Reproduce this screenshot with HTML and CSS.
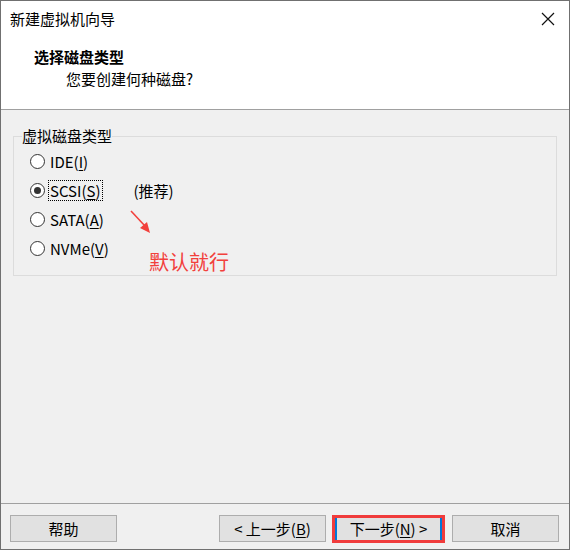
FILE: index.html
```html
<!DOCTYPE html>
<html lang="zh-CN">
<head>
<meta charset="utf-8">
<title>新建虚拟机向导</title>
<link rel="stylesheet" href="styles.css">
</head>
<body>
<div class="window">
  <div class="titlebar">
    <span class="title">新建虚拟机向导</span>
    <svg class="close" width="14" height="14" viewBox="0 0 14 14"><path d="M1 1 L13 13 M13 1 L1 13" stroke="#111" stroke-width="1.2" fill="none"/></svg>
  </div>
  <div class="header">
    <div class="h-title">选择磁盘类型</div>
    <div class="h-sub">您要创建何种磁盘?</div>
  </div>
  <div class="content">
    <fieldset class="group">
      <legend>虚拟磁盘类型</legend>
      <div class="row"><span class="radio"></span><span class="label">IDE(<u>I</u>)</span></div>
      <div class="row"><span class="radio checked"></span><span class="label focus">SCSI(<u>S</u>)</span><span class="rec">(推荐)</span></div>
      <div class="row"><span class="radio"></span><span class="label">SATA(<u>A</u>)</span></div>
      <div class="row"><span class="radio"></span><span class="label">NVMe(<u>V</u>)</span></div>
    </fieldset>
    <svg class="arrow" width="30" height="30" viewBox="0 0 30 30"><path d="M2 2 L16 17" stroke="#f2403c" stroke-width="1.6" fill="none"/><path d="M21 24 L11 19 L18 13 Z" fill="#f2403c"/></svg>
    <div class="note">默认就行</div>
  </div>
  <div class="footer">
    <button class="btn">帮助</button>
    <div class="spacer"></div>
    <button class="btn">&lt; 上一步(<u>B</u>)</button>
    <div class="mark"><button class="btn default">下一步(<u>N</u>) &gt;</button></div>
    <button class="btn">取消</button>
  </div>
</div>
</body>
</html>
```

FILE: styles.css
```css
html, body {
  margin: 0;
  padding: 0;
  background: #ffffff;
}
body {
  font-family: "Noto Sans CJK SC", "Noto Sans", sans-serif;
  color: #000;
}
.window {
  width: 570px;
  height: 550px;
  box-sizing: border-box;
  border: 1px solid #707070;
  background: #f0f0f0;
  display: flex;
  flex-direction: column;
}
.titlebar {
  height: 36px;
  background: #fff;
  display: flex;
  align-items: center;
  justify-content: space-between;
  padding: 0 14px 0 9px;
}
.title {
  font-size: 15px;
  line-height: 20px;
}
.header {
  background: #fff;
  border-bottom: 1px solid #a0a0a0;
  padding-left: 33px;
  padding-top: 9px;
  box-sizing: border-box;
  height: 73px;
}
.h-title {
  font-size: 15px;
  font-weight: bold;
  line-height: 21px;
}
.h-sub {
  font-size: 15px;
  line-height: 21px;
  padding-left: 32px;
  margin-top: 1px;
}
.content {
  flex: 1;
  position: relative;
  padding: 17px 12px 0 12px;
}
.group {
  margin: 0;
  border: 1px solid #dcdcdc;
  padding: 2px 0 10px 8px;
  height: 149px;
  box-sizing: border-box;
}
.group legend {
  font-size: 15px;
  line-height: 18px;
  padding: 0;
  margin-left: 0;
}
.row {
  display: flex;
  align-items: center;
  height: 29px;
  font-size: 15px;
  margin-left: 8px;
}
.radio {
  width: 13px;
  height: 13px;
  border: 1px solid #333;
  border-radius: 50%;
  background: #fff;
  box-sizing: content-box;
  display: flex;
  align-items: center;
  justify-content: center;
  margin-right: 3px;
}
.radio.checked::after {
  content: "";
  width: 7px;
  height: 7px;
  border-radius: 50%;
  background: #333;
}
.label {
  padding: 0 1px;
  line-height: 19px;
  border: 1px dotted transparent;
}
.label.focus {
  border-color: #000;
}
.rec {
  margin-left: 31px;
}
u {
  text-decoration-thickness: 1px;
  text-underline-offset: 2px;
}
.arrow {
  position: absolute;
  left: 128px;
  top: 99px;
}
.note {
  position: absolute;
  left: 148px;
  top: 138px;
  color: #f2403c;
  font-size: 20px;
  line-height: 28px;
}
.footer {
  height: 46px;
  border-top: 1px solid #a0a0a0;
  display: flex;
  align-items: flex-start;
  padding: 11px 10px 0 9px;
  box-sizing: border-box;
}
.spacer {
  flex: 1;
}
.btn {
  width: 107px;
  height: 27px;
  box-sizing: border-box;
  background: #e1e1e1;
  border: 1px solid #adadad;
  font-family: "Noto Sans CJK SC", "Noto Sans", sans-serif;
  font-size: 15px;
  padding: 0;
  color: #000;
  line-height: 23px;
}
.mark {
  position: relative;
  margin: 0 10px 0 9px;
}
.btn.default {
  border: 2px solid #0078d7;
  border-top-color: #adadad;
  border-bottom-color: #adadad;
  border-top-width: 1px;
  border-bottom-width: 1px;
}
.mark::after {
  content: "";
  position: absolute;
  left: -3px;
  top: 0;
  right: -3px;
  bottom: -1px;
  border: 3px solid #f03c3c;
  pointer-events: none;
}
```
